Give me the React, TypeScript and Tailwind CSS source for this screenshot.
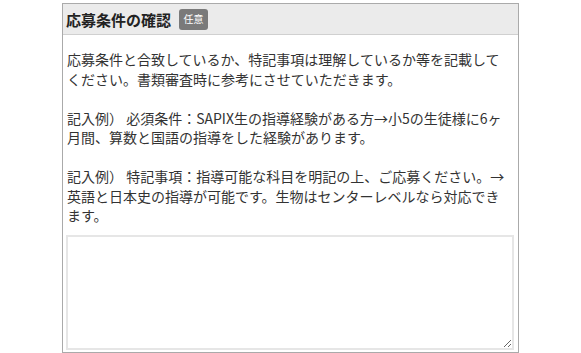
const lines1 = ["応募条件と合致しているか、特記事項は理解しているか等を記載して", "ください。書類審査時に参考にさせていただきます。"];
const lines2 = ["記入例） 必須条件：SAPIX生の指導経験がある方→小5の生徒様に6ヶ", "月間、算数と国語の指導をした経験があります。"];
const lines3 = ["記入例） 特記事項：指導可能な科目を明記の上、ご応募ください。→", "英語と日本史の指導が可能です。生物はセンターレベルなら対応でき", "ます。"];

const Para = ({ lines }: { lines: string[] }) => (
  <p className="whitespace-nowrap">
    {lines.map((l, i) => (
      <span key={i} className="block">{l}</span>
    ))}
  </p>
);

const App = () => {
  return (
    <div className="w-[581px] h-[353px] bg-white overflow-hidden pt-[3px] font-['Meiryo','Noto_Sans_CJK_JP',sans-serif]">
      <div className="mx-auto w-[457px] h-[350px] border border-[#aaaaaa] flex flex-col">
        <div className="h-[31px] bg-[#ebebeb] border-b border-[#d0d0d0] flex items-center pl-[3px] gap-[8px]">
          <span className="text-[15px] font-bold text-[#222] leading-none">応募条件の確認</span>
          <span className="bg-[#7a7a7a] text-white text-[10px] leading-none rounded-[3px] w-[29px] h-[21px] flex items-center justify-center">任意</span>
        </div>
        <div className="pt-[15px] pl-[4px] text-[14px] leading-[19.5px] text-[#333] flex flex-col gap-[19.5px]">
          <Para lines={lines1} />
          <Para lines={lines2} />
          <Para lines={lines3} />
        </div>
        <div className="flex-1 pt-[9px] pl-[3px] pr-[4px] pb-[2px] flex">
          <textarea className="flex-1 border-2 border-[#e6e6e6] bg-white outline-none" />
        </div>
      </div>
    </div>
  );
};

export default App;
